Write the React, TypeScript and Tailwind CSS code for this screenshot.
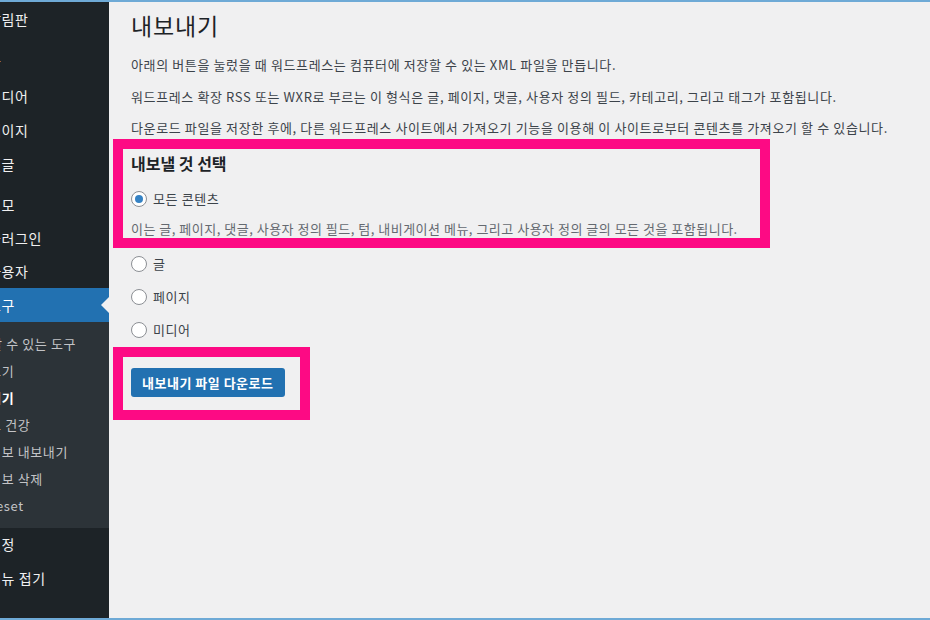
import React from "react";

const font = { fontFamily: '"Noto Sans CJK KR", "Noto Sans", sans-serif' };

function MainItem({ label, h = 34, active = false }: { label: string; h?: number; active?: boolean }) {
  return (
    <div
      className={`relative flex items-center overflow-hidden whitespace-nowrap text-[14px] tracking-[0.6px] ${
        active ? "bg-[#2271b1] text-white" : "text-[#f0f0f1]"
      }`}
      style={{ height: h }}
    >
      <span className="ml-[-12px]">{label}</span>
      {active && (
        <div className="absolute right-0 top-1/2 -translate-y-1/2 w-0 h-0 border-y-[8px] border-y-transparent border-r-[8px] border-r-[#f0f0f1]" />
      )}
    </div>
  );
}

function SubItem({ label, current = false, ml = "ml-[-35px]" }: { label: string; current?: boolean; ml?: string }) {
  return (
    <div
      className={`flex h-[27px] items-center overflow-hidden whitespace-nowrap text-[13px] tracking-[0.6px] ${
        current ? "font-bold text-white" : "text-[#c3c4c7]"
      }`}
    >
      <span className={ml}>{label}</span>
    </div>
  );
}

function Radio({ label, checked = false }: { label: string; checked?: boolean }) {
  return (
    <label className="flex h-[20px] items-center gap-[6px] text-[13px] tracking-[0.6px] text-[#3c434a]">
      <span className="flex h-[16px] w-[16px] items-center justify-center rounded-full border border-[#8c8f94] bg-white">
        {checked && <span className="h-[8px] w-[8px] rounded-full bg-[#3582c4]" />}
      </span>
      <span>{label}</span>
    </label>
  );
}

export default function App() {
  return (
    <div className="relative h-[620px] w-[930px] overflow-hidden bg-[#f0f0f1]" style={font}>
      <div className="flex h-full flex-col">
        <div className="h-[2px] w-full bg-[#6eaad6]" />
        <div className="flex flex-1 min-h-0">
          {/* Sidebar */}
          <aside className="flex w-[109px] shrink-0 flex-col bg-[#1d2327]">
            <MainItem label="알림판" />
            <div className="h-[9px]" />
            <MainItem label="글" />
            <MainItem label="미디어" />
            <MainItem label="페이지" />
            <MainItem label="댓글" />
            <div className="h-[8px]" />
            <MainItem label="외모" h={33} />
            <MainItem label="플러그인" h={33} />
            <MainItem label="사용자" h={33} />
            <MainItem label="도구" h={34} active />
            <div className="bg-[#2c3338] pt-[8px] pb-[9px]">
              <SubItem label="사용할 수 있는 도구" />
              <SubItem label="가져오기" ml="ml-[-36px]" />
              <SubItem label="내보내기" current ml="ml-[-36px]" />
              <SubItem label="사이트 건강" ml="ml-[-36px]" />
              <SubItem label="개인정보 내보내기" ml="ml-[-36px]" />
              <SubItem label="개인정보 삭제" ml="ml-[-36px]" />
              <SubItem label="WP Reset" ml="ml-[-37px]" />
            </div>
            <MainItem label="설정" h={33} />
            <MainItem label="메뉴 접기" h={34} />
          </aside>

          {/* Main */}
          <main className="flex-1 pl-[22px] pt-[8px]">
            <h1 className="h-[30px] text-[23px] leading-[30px] tracking-[0.8px] font-normal text-[#1d2327]">내보내기</h1>
            <div className="mt-[15px] flex flex-col gap-[11.5px] text-[13px] leading-[20px] tracking-[0.62px] text-[#3c434a]">
              <p>아래의 버튼을 눌렀을 때 워드프레스는 컴퓨터에 저장할 수 있는 XML 파일을 만듭니다.</p>
              <p>워드프레스 확장 RSS 또는 WXR로 부르는 이 형식은 글, 페이지, 댓글, 사용자 정의 필드, 카테고리, 그리고 태그가 포함됩니다.</p>
              <p>다운로드 파일을 저장한 후에, 다른 워드프레스 사이트에서 가져오기 기능을 이용해 이 사이트로부터 콘텐츠를 가져오기 할 수 있습니다.</p>
            </div>
            <h2 className="mt-[13px] h-[24px] text-[16px] leading-[24px] font-semibold text-[#1d2327]">내보낼 것 선택</h2>
            <div className="mt-[14px]">
              <Radio label="모든 콘텐츠" checked />
            </div>
            <p className="mt-[10px] text-[13px] leading-[20px] tracking-[0.5px] text-[#646970]">
              이는 글, 페이지, 댓글, 사용자 정의 필드, 텀, 내비게이션 메뉴, 그리고 사용자 정의 글의 모든 것을 포함됩니다.
            </p>
            <div className="mt-[15px] flex flex-col gap-[13px]">
              <Radio label="글" />
              <Radio label="페이지" />
              <Radio label="미디어" />
            </div>
            <button className="mt-[28px] h-[29px] rounded-[3px] bg-[#2271b1] px-[11px] text-[13px] tracking-[0.5px] font-semibold text-white">
              내보내기 파일 다운로드
            </button>
          </main>
        </div>
        <div className="h-[2px] w-full bg-[#6eaad6]" />
      </div>

      {/* Annotation boxes */}
      <div className="pointer-events-none absolute left-[113px] top-[139px] h-[109px] w-[657px] border-[10px] border-[#fd0a84]" />
      <div className="pointer-events-none absolute left-[113px] top-[347px] h-[73px] w-[197px] border-[10px] border-[#fd0a84]" />
    </div>
  );
}
